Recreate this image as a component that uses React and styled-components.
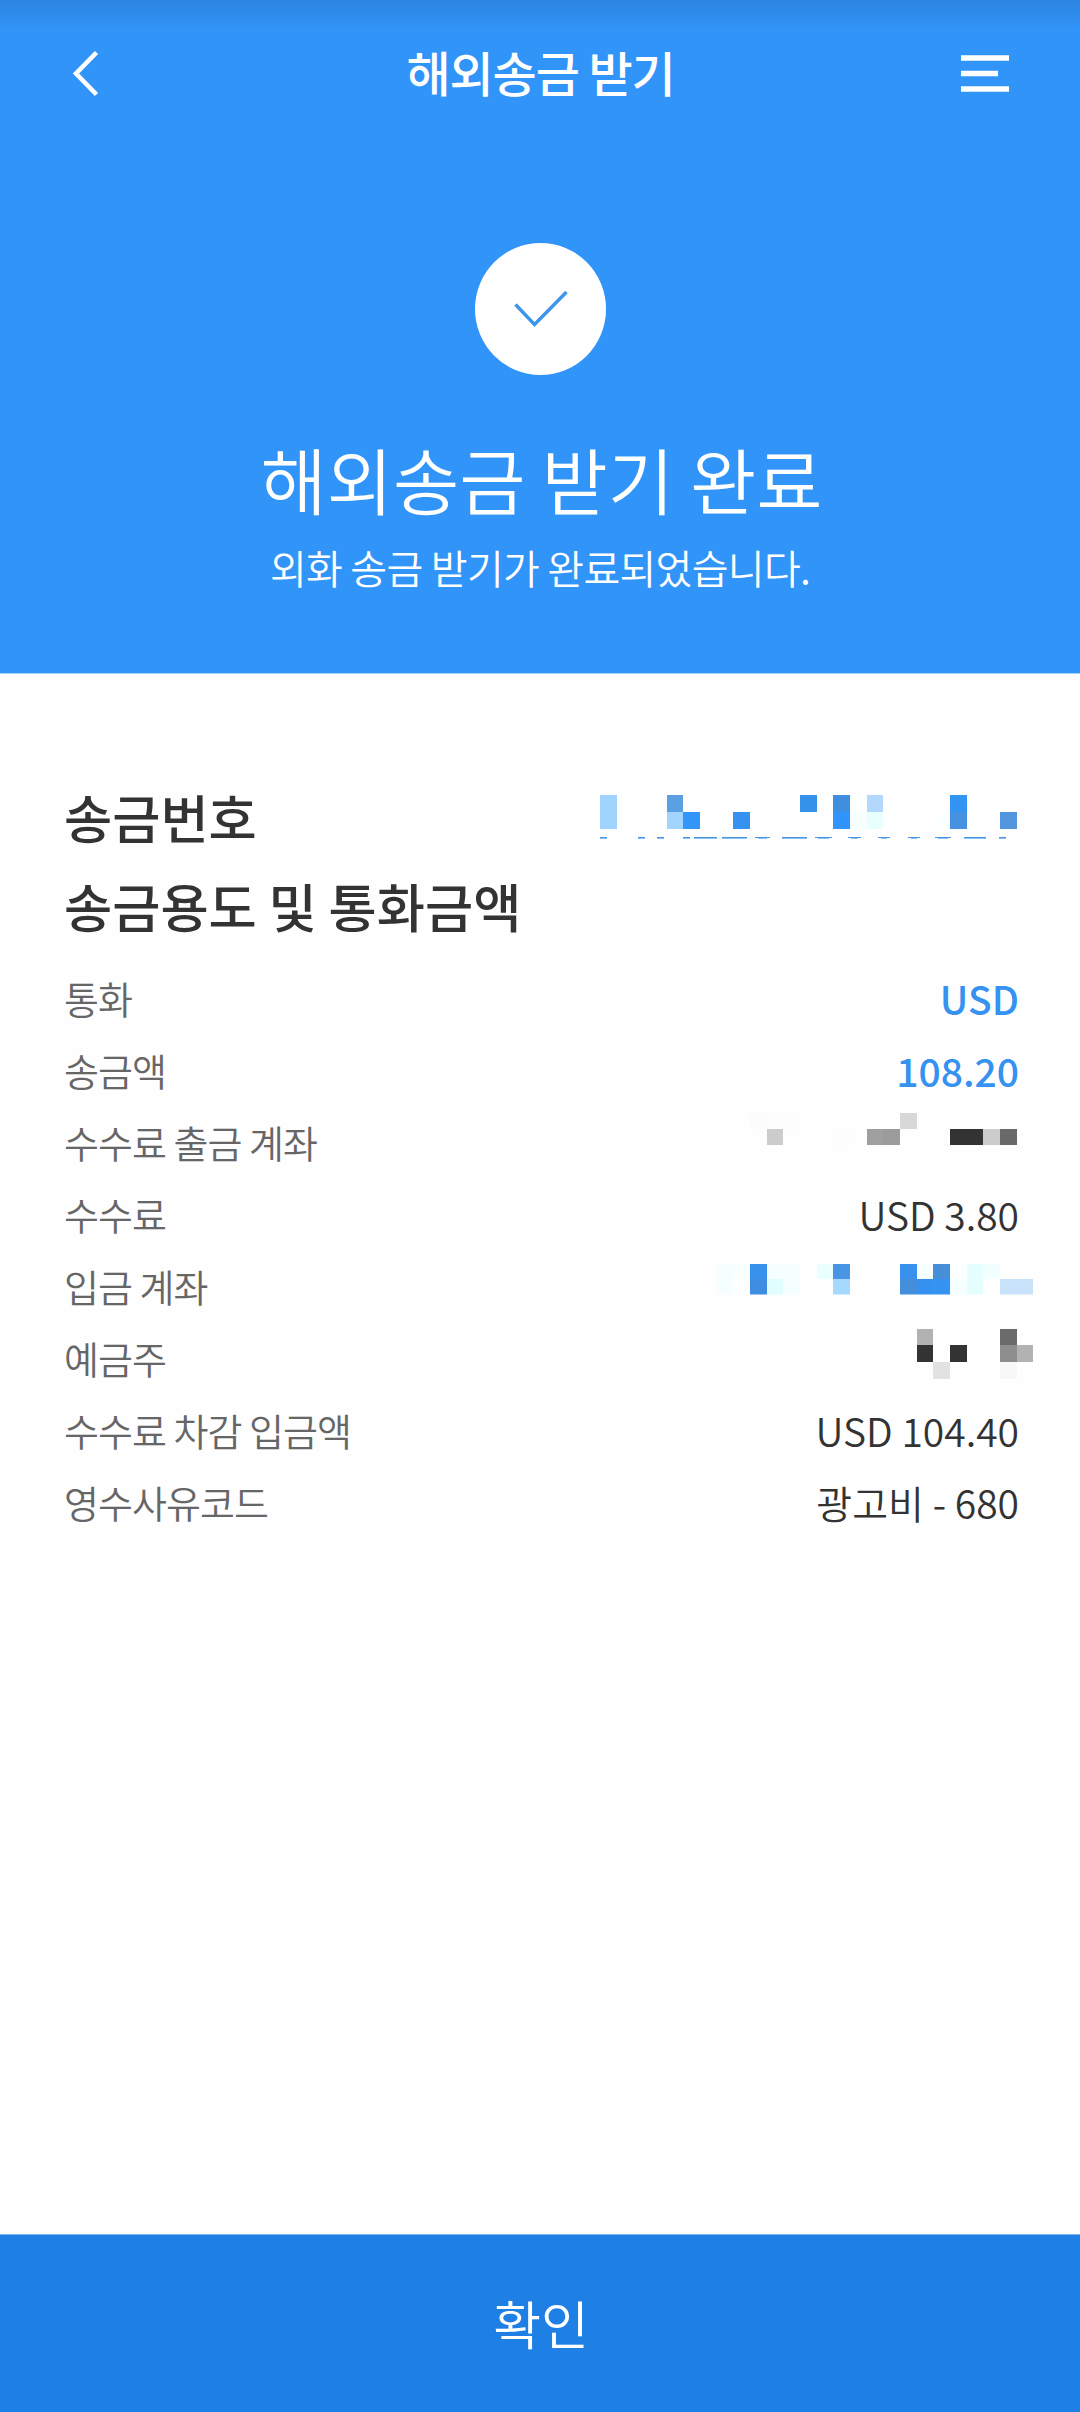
import React from 'react'
import styled, { createGlobalStyle } from 'styled-components';

const CELL = 50 / 3;

// cells are [column, width in columns, row, color]
const numberMask = {
    rows: [0, 17, 34],
    cells: [
        [0, 1, 0, '#a0d4ff'], [0, 1, 1, '#a0d4ff'], [4, 1, 0, '#5ca0e4'], [4, 1, 1, '#a3d3ff'],
        [5, 1, 1, '#3195f9'], [8, 1, 1, '#3592f0'], [12, 1, 0, '#3592eb'], [14, 1, 0, '#3f8fe0'],
        [14, 1, 1, '#3095fa'], [15, 1, 0, '#fcffff'], [15, 1, 1, '#f6fffe'], [16, 1, 0, '#b4d7fc'],
        [16, 1, 1, '#e8fffe'], [20, 1, 1, '#fcffff'], [21, 1, 0, '#3494f4'], [21, 1, 1, '#4792e0'],
        [24, 1, 1, '#5296de'],
    ],
};

const feeAccountMask = {
    rows: [0, 16, 32],
    cells: [
        [9, 1, 0, '#fcfcfc'], [10, 2, 0, '#fdfdfd'], [10, 1, 1, '#cccccc'], [14, 1, 1, '#fdfdfd'],
        [16, 1, 1, '#9f9f9f'], [17, 1, 1, '#9b9b9b'], [18, 1, 0, '#d8d8d8'], [21, 2, 1, '#333333'],
        [23, 1, 1, '#cccccc'], [24, 1, 1, '#696969'],
    ],
};

const accountMask = {
    rows: [0, 15, 31],
    cells: [
        [7, 1, 0, '#f5ffff'], [8, 1, 0, '#f8ffff'], [7, 1, 1, '#f6ffff'], [9, 1, 0, '#3892ec'],
        [9, 1, 1, '#3d8ee1'], [10, 2, 0, '#f6ffff'], [10, 1, 1, '#e0fdff'], [11, 1, 1, '#f6ffff'],
        [13, 1, 0, '#eaffff'], [14, 1, 0, '#4a95e3'], [14, 1, 1, '#a5d9ff'], [18, 1, 0, '#3892ed'],
        [18, 1, 1, '#438fdc'], [19, 1, 0, '#f8ffff'], [19, 1, 1, '#3591ef'], [20, 1, 0, '#478fd8'],
        [20, 1, 1, '#3493f3'], [21, 1, 0, '#fbffff'], [21, 1, 1, '#f5ffff'], [22, 1, 0, '#e5ffff'],
        [22, 1, 1, '#e5ffff'], [23, 1, 0, '#f2ffff'], [24, 2, 1, '#c8e3f9'],
    ],
};

const ownerMask = {
    rows: [0, 16, 33, 50],
    cells: [
        [19, 1, 0, '#b2b2b2'], [19, 1, 1, '#333333'], [20, 1, 2, '#e2e2e2'], [21, 1, 1, '#333333'],
        [24, 1, 0, '#6b6b6b'], [24, 1, 1, '#8e8e8e'], [24, 1, 2, '#f8f8f8'], [25, 1, 1, '#b2b2b2'],
    ],
};

// lower edge of the covered number: [x, width, rounded]
const strokes = [
    [0, 7], [38, 7], [57, 7], [83, 7], [94, 23], [122, 25], [155, 15, true], [182, 25], [215, 17, true],
    [248, 13, true], [278, 12, true], [308, 12, true], [335, 16, true], [364, 22], [399, 7],
];

const details = [
    { label: '통화', value: 'USD', strong: true },
    { label: '송금액', value: '108.20', strong: true },
    { label: '수수료 출금 계좌', mask: feeAccountMask, shift: '-13px' },
    { label: '수수료', value: 'USD 3.80' },
    { label: '입금 계좌', mask: accountMask, shift: '-7.5px' },
    { label: '예금주', mask: ownerMask, shift: '-4px' },
    { label: '수수료 차감 입금액', value: 'USD 104.40' },
    { label: '영수사유코드', value: '광고비 - 680' },
];

function Mask({ mask, shift, underline }) {
    const { rows, cells } = mask;
    const last = rows[rows.length - 1];
    const height = underline ? last + 12 : last;
    return (
        <MaskStyled width="434" height={height} $shift={shift} shapeRendering="crispEdges" aria-hidden="true">
            {cells.map(([col, span, row, color]) => (
                <rect
                    key={`${col}-${row}`}
                    x={Math.round(col * CELL)}
                    y={rows[row]}
                    width={Math.round((col + span) * CELL) - Math.round(col * CELL)}
                    height={rows[row + 1] - rows[row]}
                    fill={color}
                />
            ))}
            {underline && strokes.map(([x, width, rounded]) => (
                <g key={x}>
                    <rect x={x} y={last + 8} width={width} height="1" fill="#4a94e2" />
                    <rect
                        x={rounded ? x + 3 : x}
                        y={last + 9}
                        width={rounded ? width - 6 : width}
                        height="1"
                        fill="#86c0f6"
                    />
                </g>
            ))}
        </MaskStyled>
    )
}

function App() {
    return (
        <PageStyled>
            <GlobalStyle />
            <HeroStyled>
                <TopBar>
                    <IconButton aria-label="back">
                        <svg width="28" height="48" viewBox="0 0 28 48">
                            <path d="M24.5 2.5 L4 23.5 L24.5 44.5" fill="none" stroke="#fff" strokeWidth="4.6" />
                        </svg>
                    </IconButton>
                    <h1>해외송금 받기</h1>
                    <IconButton aria-label="menu">
                        <svg width="48" height="38" viewBox="0 0 48 38">
                            <path d="M0 3 H48 M0 18.5 H37 M0 34 H48" fill="none" stroke="#fff" strokeWidth="5.6" />
                        </svg>
                    </IconButton>
                </TopBar>
                <CheckCircle>
                    <svg width="56" height="38" viewBox="0 0 56 38">
                        <path d="M3.5 14.5 L22.5 34.5 L54.5 2" fill="none" stroke="#3d95ec" strokeWidth="3.4" />
                    </svg>
                </CheckCircle>
                <h2>해외송금 받기 완료</h2>
                <p>외화 송금 받기가 완료되었습니다.</p>
            </HeroStyled>
            <ContentStyled>
                <SectionRow>
                    <h3>송금번호</h3>
                    <Mask mask={numberMask} shift="0.5px" underline />
                </SectionRow>
                <SectionRow>
                    <h3>송금용도 및 통화금액</h3>
                </SectionRow>
                <DetailList>
                    {details.map(({ label, value, strong, mask, shift }) => (
                        <DetailRow key={label}>
                            <dt>{label}</dt>
                            {mask ? <dd><Mask mask={mask} shift={shift} /></dd> : <DetailValue $strong={strong}>{value}</DetailValue>}
                        </DetailRow>
                    ))}
                </DetailList>
            </ContentStyled>
            <ConfirmButton>확인</ConfirmButton>
        </PageStyled>
    )
}

const GlobalStyle = createGlobalStyle`
    *{
        margin: 0;
        padding: 0;
        box-sizing: border-box;
    }
    body{
        font-family: "Noto Sans CJK KR", sans-serif;
        background: #fefefe;
    }
    button{
        border: none;
        font-family: inherit;
        color: inherit;
    }
`;

const PageStyled = styled.div`
    display: flex;
    flex-direction: column;
    width: 1080px;
    height: 2412px;
    background: #fefefe;
`;

const HeroStyled = styled.header`
    display: flex;
    flex-direction: column;
    align-items: center;
    height: 674px;
    color: #fff;
    background: linear-gradient(#2b84e0, #2e8bea 14px, #3194f8 28px);
    border-bottom: 1px solid #a6d2f8;
    h2{
        margin-top: 51px;
        padding-left: 3px;
        font-size: 72px;
        font-weight: 350;
        line-height: 104px;
    }
    p{
        margin-top: 8px;
        font-size: 40px;
        font-weight: 350;
        line-height: 58px;
        letter-spacing: -0.7px;
    }
`;

const TopBar = styled.div`
    display: flex;
    align-items: center;
    justify-content: space-between;
    width: 100%;
    height: 147px;
    padding: 0 71px 0 72px;
    h1{
        margin-top: -5px;
        font-size: 48px;
        font-weight: 500;
        line-height: 70px;
        letter-spacing: -1.1px;
    }
`;

const IconButton = styled.button`
    display: flex;
    align-items: center;
    width: 48px;
    background: none;
`;

const CheckCircle = styled.div`
    display: flex;
    align-items: center;
    justify-content: center;
    flex: none;
    width: 131px;
    height: 132px;
    margin-top: 96px;
    border-radius: 50%;
    background: #fff;
`;

const ContentStyled = styled.main`
    flex: 1;
    padding: 98px 62px 0 64px;
`;

const SectionRow = styled.div`
    display: flex;
    align-items: center;
    justify-content: space-between;
    height: 89px;
    h3{
        margin-top: -2px;
        font-size: 52.4px;
        font-weight: 500;
        line-height: 76px;
        color: #333;
        white-space: nowrap;
    }
`;

const DetailList = styled.dl`
    padding-top: 12px;
`;

const DetailRow = styled.div`
    display: flex;
    align-items: center;
    justify-content: space-between;
    height: 72px;
    dt{
        font-size: 38px;
        font-weight: 350;
        line-height: 56px;
        letter-spacing: -0.95px;
        color: #666;
    }
`;

const DetailValue = styled.dd`
    margin-right: -1px;
    font-size: 39px;
    font-weight: ${({ $strong }) => ($strong ? 500 : 350)};
    line-height: 56px;
    color: ${({ $strong }) => ($strong ? '#3592f0' : '#333')};
`;

const MaskStyled = styled.svg`
    display: block;
    flex: none;
    margin-right: -16px;
    transform: translateY(${({ $shift }) => $shift});
`;

const ConfirmButton = styled.button`
    flex: none;
    height: 178px;
    padding: 0 0 2px 2px;
    color: #fff;
    background: #1e80e4;
    border-top: 1px solid #7db5ee;
    font-size: 52px;
    font-weight: 350;
    line-height: 76px;
`;

export default App
